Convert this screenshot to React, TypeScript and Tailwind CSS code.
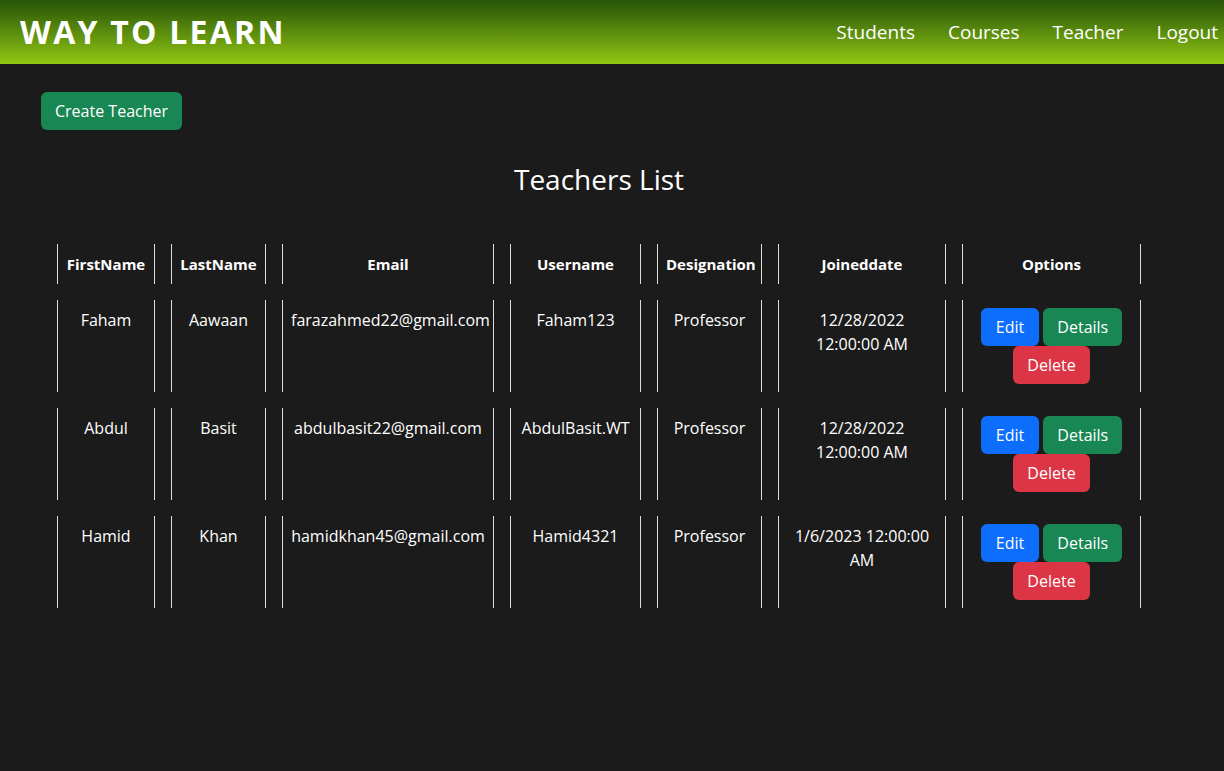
import React from "react";

type Teacher = {
  first: string;
  last: string;
  email: string;
  username: string;
  designation: string;
  joined: string;
};

const teachers: Teacher[] = [
  {
    first: "Faham",
    last: "Aawaan",
    email: "farazahmed22@gmail.com",
    username: "Faham123",
    designation: "Professor",
    joined: "12/28/2022 12:00:00 AM",
  },
  {
    first: "Abdul",
    last: "Basit",
    email: "abdulbasit22@gmail.com",
    username: "AbdulBasit.WT",
    designation: "Professor",
    joined: "12/28/2022 12:00:00 AM",
  },
  {
    first: "Hamid",
    last: "Khan",
    email: "hamidkhan45@gmail.com",
    username: "Hamid4321",
    designation: "Professor",
    joined: "1/6/2023 12:00:00 AM",
  },
];

const font = { fontFamily: '"Open Sans", "Noto Sans", sans-serif' };

const cell = "border-x border-[#dcdcdc] p-2 align-top text-center";

export default function App() {
  return (
    <div className="min-h-[771px] bg-[#1b1b1b] text-white" style={font}>
      {/* nav */}
      <nav className="flex h-16 items-center justify-between bg-gradient-to-b from-[#275407] to-[#92c813] pl-5 pr-1.5">
        <span className="text-[32px] font-bold tracking-[0.07em]">WAY TO LEARN</span>
        <div className="flex items-center gap-[33px] text-[19px]">
          <a>Students</a>
          <a>Courses</a>
          <a>Teacher</a>
          <a>Logout</a>
        </div>
      </nav>

      <div className="ml-[41px] w-[1116px] pt-7">
        <button className="h-[38px] rounded-md bg-[#198754] px-[14px] text-base">
          Create Teacher
        </button>

        <h2 className="mt-[29px] text-center text-[28px] leading-10">Teachers List</h2>

        <table className="mt-[29px] w-[1116px] table-fixed border-separate border-spacing-4 text-base leading-6">
          <colgroup>
            <col className="w-[98px]" />
            <col className="w-[95px]" />
            <col className="w-[212px]" />
            <col className="w-[131px]" />
            <col className="w-[105px]" />
            <col className="w-[168px]" />
            <col className="w-[179px]" />
          </colgroup>
          <thead>
            <tr className="text-[15px] font-bold">
              <th className={cell}>FirstName</th>
              <th className={cell}>LastName</th>
              <th className={cell}>Email</th>
              <th className={cell}>Username</th>
              <th className={cell}>Designation</th>
              <th className={cell}>Joineddate</th>
              <th className={cell}>Options</th>
            </tr>
          </thead>
          <tbody>
            {teachers.map((t) => (
              <tr key={t.username}>
                <td className={cell}>{t.first}</td>
                <td className={cell}>{t.last}</td>
                <td className={cell}>{t.email}</td>
                <td className={cell}>{t.username}</td>
                <td className={cell}>{t.designation}</td>
                <td className={cell}>{t.joined}</td>
                <td className={cell}>
                  <button className="h-[38px] rounded-md bg-[#0d6efd] px-[15px]">Edit</button>{" "}
                  <button className="h-[38px] rounded-md bg-[#198754] px-[14px]">Details</button>{" "}
                  <button className="h-[38px] rounded-md bg-[#dc3545] px-[14px]">Delete</button>
                </td>
              </tr>
            ))}
          </tbody>
        </table>
      </div>
    </div>
  );
}
